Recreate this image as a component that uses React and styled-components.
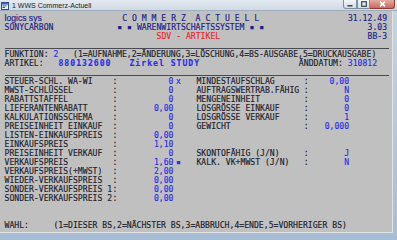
import React from 'react';
import styled, { createGlobalStyle } from 'styled-components';

// width of one console cell (DejaVu Sans Mono advance at 8.15px)
const CW = 4.906;

const GlobalStyle = createGlobalStyle`
  html, body {
    margin: 0;
    padding: 0;
    background: #a9bfd6;
  }
  body {
    width: 397px;
    height: 240px;
    overflow: hidden;
  }
`;

const Window = styled.div`
  width: 397px;
  height: 240px;
  display: flex;
  flex-direction: column;
  background: linear-gradient(#c6d5e5, #a7bdd5);
  overflow: hidden;
`;

const TitleBar = styled.div`
  height: 11px;
  flex: none;
  display: flex;
  align-items: flex-start;
  background: linear-gradient(#e4eaf1, #d0dae5);
  border-bottom: 1px solid #9eaebf;
  box-sizing: border-box;
`;

const AppIcon = styled.svg`
  width: 8px;
  height: 8px;
  margin: 2px 0 0 1px;
  flex: none;
`;

const Title = styled.span`
  font-family: "Liberation Sans", Arial, sans-serif;
  font-size: 7px;
  line-height: 11px;
  color: #1b1b1b;
  margin-left: 3px;
  flex: 1;
`;

const WindowButtons = styled.div`
  display: flex;
  margin-right: 2px;
`;

const CaptionButton = styled.div`
  width: ${p => p.$w}px;
  height: 9px;
  box-sizing: border-box;
  border: 1px solid ${p => (p.$close ? '#8c3f38' : '#7e8da0')};
  border-top: none;
  background: ${p =>
    p.$close
      ? 'linear-gradient(#e4aaa2, #c96a5d)'
      : 'linear-gradient(#f2f5f8, #d3dce6)'};
  display: flex;
  align-items: center;
  justify-content: center;
  &:first-child {
    border-bottom-left-radius: 3px;
  }
  &:last-child {
    border-bottom-right-radius: 3px;
    border-left: none;
  }
`;

const Frame = styled.div`
  flex: 1;
  min-height: 0;
  display: flex;
  padding: 0 4px 7px 0;
`;

const Console = styled.div`
  flex: 1;
  box-sizing: border-box;
  background: #c0c0c0;
  padding: 2.8px 0 0 4.5px;
  border-right: 1px solid #e4e4e4;
  border-bottom: 1px solid #e4e4e4;
  overflow: hidden;
  font-family: "DejaVu Sans Mono", monospace;
  font-size: 8.15px;
  line-height: 9px;
  color: #1e1e2c;
  white-space: pre;
  -webkit-text-stroke: 0.15px currentColor;
`;

const Line = styled.div`
  height: 9px;
`;

const Rule = styled.div`
  height: 9px;
  position: relative;
  &::after {
    content: '';
    position: absolute;
    left: 0.5px;
    width: 384px;
    top: 7px;
    height: 1px;
    background: #4a4a55;
  }
`;

const tones = {
  dark: '#1e1e2c',
  navy: '#1a2388',
  blue: '#2f2fe2',
  red: '#e42a2a',
};

const Tone = styled.span`
  color: ${p => tones[p.$tone || 'dark']};
`;

const Slot = styled.span`
  display: inline-block;
  width: ${p => (p.$px != null ? p.$px : p.$cols * CW)}px;
  overflow: visible;
  vertical-align: top;
`;

const Narrow = styled.span`
  font-family: "Liberation Sans", Arial, sans-serif;
  font-size: 8.6px;
  color: ${tones.navy};
`;

const Bold = styled.span`
  font-weight: bold;
  letter-spacing: 1px;
  color: ${tones.blue};
`;

const Table = styled.div`
  display: grid;
  grid-template-columns: 107.9px 4.9px 56.2px 23px 107.3px 4.9px 40.5px;
  grid-auto-rows: 9px;
`;

const Label = styled.span`
  color: ${tones.dark};
`;

const Colon = styled.span`
  text-align: center;
`;

const Value = styled.span`
  text-align: right;
  color: ${tones.blue};
`;

const Marker = styled.span`
  padding-left: 2.5px;
  color: ${tones.blue};
`;

const fields = [
  ['STEUER-SCHL. WA-WI', '0', 'x', 'MINDESTAUFSCHLAG', '0,00'],
  ['MWST-SCHLÜSSEL', '0', '', 'AUFTRAGSWERTRAB.FÄHIG', 'N'],
  ['RABATTSTAFFEL', '0', '', 'MENGENEINHEIT', '0'],
  ['LIEFERANTENRABATT', '0,00', '', 'LOSGRÖSSE EINKAUF', '0'],
  ['KALKULATIONSSCHEMA', '0', '', 'LOSGRÖSSE VERKAUF', '1'],
  ['PREISEINHEIT EINKAUF', '0', '', 'GEWICHT', '0,000'],
  ['LISTEN-EINKAUFSPREIS', '0,00', '', '', ''],
  ['EINKAUFSPREIS', '1,10', '', '', ''],
  ['PREISEINHEIT VERKAUF', '0', '', 'SKONTOFÄHIG (J/N)', 'J'],
  ['VERKAUFSPREIS', '1,60', '▪', 'KALK. VK+MWST (J/N)', 'N'],
  ['VERKAUFSPREIS(+MWST)', '2,00', '', '', ''],
  ['WIEDER-VERKAUFSPREIS', '0,00', '', '', ''],
  ['SONDER-VERKAUFSPREIS 1', '0,00', '', '', ''],
  ['SONDER-VERKAUFSPREIS 2', '0,00', '', '', ''],
];

const FieldTable = () => (
  <Table>
    {fields.map(([l1, v1, mark, l2, v2]) => (
      <React.Fragment key={l1}>
        <Label>{l1}</Label>
        <Colon>:</Colon>
        <Value>{v1}</Value>
        <Marker>{mark}</Marker>
        <Label>{l2}</Label>
        <Colon>{l2 ? ':' : ''}</Colon>
        <Value>{v2}</Value>
      </React.Fragment>
    ))}
  </Table>
);

export default function App() {
  return (
    <>
      <GlobalStyle />
      <Window>
        <TitleBar>
          <AppIcon viewBox="0 0 8 8">
            <rect x="0.5" y="0.5" width="7" height="7" fill="#e8eef5" stroke="#2d4f8c" />
            <rect x="1" y="1" width="6" height="1.6" fill="#3a6cc0" />
            <rect x="1.5" y="3.5" width="4" height="0.8" fill="#22304a" />
            <rect x="1.5" y="5.2" width="2.5" height="0.8" fill="#22304a" />
          </AppIcon>
          <Title>1 WWS Commerz-Actuell</Title>
          <WindowButtons>
            <CaptionButton $w={14}>
              <svg width="6" height="6" viewBox="0 0 6 6">
                <rect x="0.5" y="4" width="5" height="1.5" fill="#3a4656" />
              </svg>
            </CaptionButton>
            <CaptionButton $w={13}>
              <svg width="6" height="6" viewBox="0 0 6 6">
                <rect x="0.7" y="0.7" width="4.6" height="4.6" fill="none" stroke="#3a4656" strokeWidth="1.2" />
              </svg>
            </CaptionButton>
            <CaptionButton $w={25} $close>
              <svg width="7" height="6" viewBox="0 0 7 6">
                <path d="M1 0.6 L6 5.4 M6 0.6 L1 5.4" stroke="#ffffff" strokeWidth="1.5" />
              </svg>
            </CaptionButton>
          </WindowButtons>
        </TitleBar>
        <Frame>
          <Console>
            <Line>
              <Slot $cols={24}><Narrow>logics sys</Narrow></Slot>
              <Slot $cols={46}><Tone $tone="navy">C O M M E R Z  A C T U E L L</Tone></Slot>
              <Tone $tone="navy">31.12.49</Tone>
            </Line>
            <Line>
              <Slot $cols={23}><Tone $tone="navy">SONYCARBON</Tone></Slot>
              <Slot $cols={51}><Tone $tone="navy">▪ ▪ WARENWIRTSCHAFTSSYSTEM ▪ ▪</Tone></Slot>
              <Tone $tone="navy">3.03</Tone>
            </Line>
            <Line>
              <Slot $cols={31} />
              <Slot $cols={43}><Tone $tone="red">SDV - ARTIKEL</Tone></Slot>
              <Tone $tone="navy">BB-3</Tone>
            </Line>
            <Rule />
            <Line>
              FUNKTION: <Tone $tone="blue">2</Tone>   (1=AUFNAHME,2=ÄNDERUNG,3=LÖSCHUNG,4=BS-AUSGABE,5=DRUCKAUSGABE)
            </Line>
            <Line>
              <Slot $cols={11}>ARTIKEL:</Slot>
              <Slot $px={71}><Bold>880132600</Bold></Slot>
              <Slot $px={169.4}><Bold>Zirkel STUDY</Bold></Slot>
              ÄNDDATUM: <Tone $tone="blue">310812</Tone>
            </Line>
            <Rule />
            <FieldTable />
            <Line />
            <Line />
            <Line>
              WAHL:     (1=DIESER BS,2=NÄCHSTER BS,3=ABBRUCH,4=ENDE,5=VORHERIGER BS)
            </Line>
          </Console>
        </Frame>
      </Window>
    </>
  );
}
